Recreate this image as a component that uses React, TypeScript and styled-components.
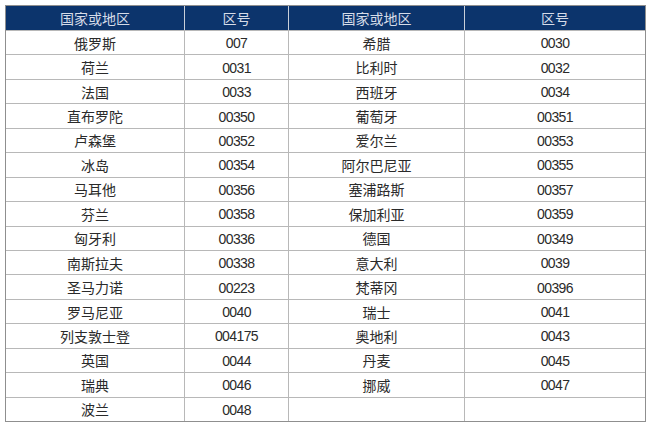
import styled, { createGlobalStyle } from 'styled-components';

const GlobalStyle = createGlobalStyle`
  html, body {
    margin: 0;
    padding: 0;
    background: #ffffff;
  }
  body {
    padding: 5px 0 0 5px;
    font-family: 'Liberation Sans', 'Noto Sans CJK SC', sans-serif;
  }
`;

const headers = ['国家或地区', '区号', '国家或地区', '区号'];

const rows: [string, string, string, string][] = [
  ['俄罗斯', '007', '希腊', '0030'],
  ['荷兰', '0031', '比利时', '0032'],
  ['法国', '0033', '西班牙', '0034'],
  ['直布罗陀', '00350', '葡萄牙', '00351'],
  ['卢森堡', '00352', '爱尔兰', '00353'],
  ['冰岛', '00354', '阿尔巴尼亚', '00355'],
  ['马耳他', '00356', '塞浦路斯', '00357'],
  ['芬兰', '00358', '保加利亚', '00359'],
  ['匈牙利', '00336', '德国', '00349'],
  ['南斯拉夫', '00338', '意大利', '0039'],
  ['圣马力诺', '00223', '梵蒂冈', '00396'],
  ['罗马尼亚', '0040', '瑞士', '0041'],
  ['列支敦士登', '004175', '奥地利', '0043'],
  ['英国', '0044', '丹麦', '0045'],
  ['瑞典', '0046', '挪威', '0047'],
  ['波兰', '0048', '', ''],
];

const App = () => (
  <>
    <GlobalStyle />
    <StyledTable>
      {headers.map((h, i) => (
        <StyledHead key={`h${i}`}>{h}</StyledHead>
      ))}
      {rows.map((row, i) =>
        row.map((cell, j) => (
          <StyledCell key={`${i}-${j}`} $code={j % 2 === 1}>
            {cell}
          </StyledCell>
        )),
      )}
    </StyledTable>
  </>
);

export default App;

const StyledTable = styled.div`
  display: grid;
  grid-template-columns: 178px 104px 176px 181px;
  grid-template-rows: 24px;
  grid-auto-rows: 24.45px;
  width: max-content;
  border: 1px solid #8f8f8f;
`;

const StyledHead = styled.div`
  display: flex;
  align-items: center;
  justify-content: center;
  background: #0c346c;
  color: #d6dce8;
  font-family: 'Noto Sans CJK SC', sans-serif;
  font-size: 14px;
  line-height: 1;
  border-left: 1px solid #c9cfd9;
  &:first-child {
    border-left: none;
  }
`;

const StyledCell = styled.div<{ $code: boolean }>`
  display: flex;
  align-items: center;
  justify-content: center;
  box-sizing: border-box;
  border-left: 1px solid #b8b8b8;
  border-top: 1px solid #b8b8b8;
  &:nth-child(4n + 1) {
    border-left: none;
  }
  color: #2a2a2a;
  font-family: ${(p) =>
    p.$code ? "'Liberation Sans', sans-serif" : "'Noto Sans CJK SC', sans-serif"};
  font-size: 14px;
  letter-spacing: ${(p) => (p.$code ? '-0.6px' : '0')};
  line-height: 1;
  padding-top: ${(p) => (p.$code ? '1px' : '0')};
`;
